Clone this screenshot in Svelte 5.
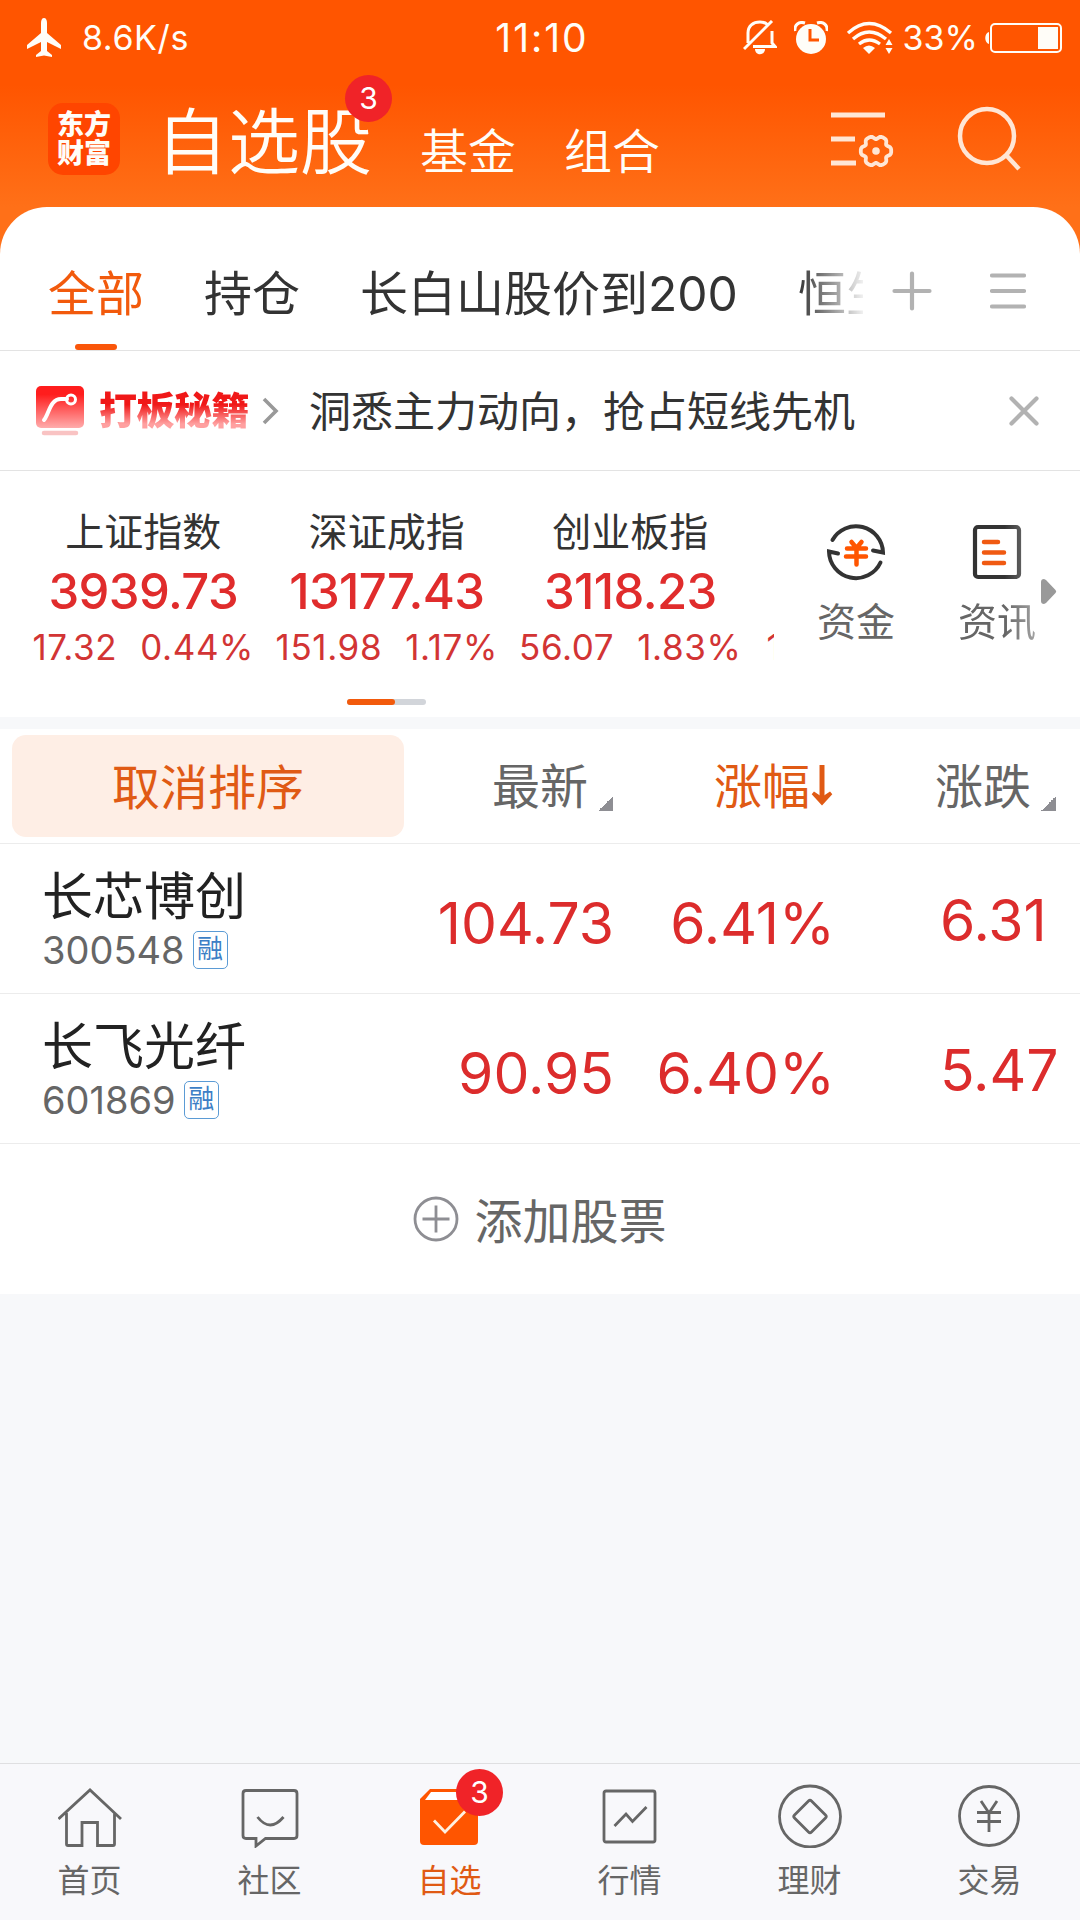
<script>
	const groups = ['全部', '持仓', '长白山股价到200', '恒生'];
	let activeGroup = $state('全部');
	let showBanner = $state(true);
	let activeNav = $state('自选');

	const indices = [
		{ name: '上证指数', price: '3939.73', change: '17.32', percent: '0.44%' },
		{ name: '深证成指', price: '13177.43', change: '151.98', percent: '1.17%' },
		{ name: '创业板指', price: '3118.23', change: '56.07', percent: '1.83%' }
	];

	const stocks = [
		{ name: '长芯博创', code: '300548', price: '104.73', percent: '6.41%', change: '6.31' },
		{ name: '长飞光纤', code: '601869', price: '90.95', percent: '6.40%', change: '5.47' }
	];

	const nav = ['首页', '社区', '自选', '行情', '理财', '交易'];

	// six-lobed gear outline, sampled every 5 degrees
	function gearPath(cx, cy) {
		const points = [];
		for (let deg = 0; deg < 360; deg += 5) {
			const t = (deg * Math.PI) / 180;
			const r = 14 + 1.7 * Math.cos(6 * t) - 0.5 * Math.cos(12 * t);
			points.push(`${(cx + r * Math.cos(t)).toFixed(2)} ${(cy + r * Math.sin(t)).toFixed(2)}`);
		}
		return `M${points.join('L')}Z`;
	}
</script>

<div class="screen">
	<header class="top">
		<div class="status">
			<div class="status-side">
				<svg class="plane" width="34" height="40" viewBox="0 0 34 40" fill="currentColor">
					<path d="M17 0c2 0 3 2 3 5v10l14 12v4l-14-7v9l5 4v2l-8-1.500-8 1.500v-2l5-4v-9L0 31v-4l14-12V5c0-3 1-5 3-5z" />
				</svg>
				<span class="speed">8.6K/s</span>
			</div>
			<span class="time">11:10</span>
			<div class="status-side right">
				<svg class="bell" width="34" height="35" viewBox="0 0 34 35" fill="none" stroke="currentColor" stroke-width="3">
					<path d="M5 23V13C5 6 10 2 17 2c4 0 6 1 8 3M29 11v12l3 3.500H10M1 29 29 1" />
					<path d="M12 29h10c0 7-10 7-10 0z" fill="currentColor" stroke="none" />
				</svg>
				<svg class="alarm" width="34" height="34" viewBox="0 0 34 34">
					<path d="M1 10C0 4 5 0 11 2M33 10c1-6-4-10-10-8" fill="none" stroke="currentColor" stroke-width="3" />
					<circle cx="17" cy="18" r="15" fill="currentColor" />
					<path d="M16 8v11h9" fill="none" stroke="#ff5500" stroke-width="3" />
				</svg>
				<svg class="wifi" width="46" height="34" viewBox="0 0 46 34" fill="none" stroke="currentColor" stroke-width="3.300">
					<path d="M1 12q21-19 43 0M6 18q16-14 33 0M12 23q10-8 21 0" />
					<path d="M16 27q6-5 12 0l-6 6z" fill="currentColor" stroke="none" />
					<path d="m42 18 3.500 6h-7zM42 33l3.500-6h-7z" fill="currentColor" stroke="none" />
				</svg>
				<span class="charge">33%</span>
				<svg class="battery" width="77" height="32" viewBox="0 0 77 32">
					<rect x="6" y="2" width="70" height="28" rx="4" fill="none" stroke="currentColor" stroke-width="2" />
					<path d="M4 10v12c-5-1-5-11 0-12z" fill="currentColor" />
					<rect x="53" y="5" width="20" height="22" fill="currentColor" />
				</svg>
			</div>
		</div>

		<div class="title-bar">
			<div class="logo"><span>东方</span><span>财富</span></div>
			<h1>自选股<span class="badge">3</span></h1>
			<span class="sub">基金</span>
			<span class="sub">组合</span>
			<svg class="filter" width="64" height="60" viewBox="0 0 64 60" fill="none" stroke="currentColor" stroke-width="5">
				<path d="M0 6h54M0 30h24M0 54h25" />
				<path d={gearPath(45, 42)} stroke-width="3.800" stroke-linejoin="round" />
				<circle cx="45" cy="42" r="3.800" fill="currentColor" stroke="none" />
			</svg>
			<svg class="search" width="64" height="66" viewBox="0 0 64 66" fill="none" stroke="currentColor" stroke-width="4.500">
				<circle cx="30" cy="30" r="27" />
				<path d="m49 49 13 14" />
			</svg>
		</div>
	</header>

	<main class="sheet">
		<div class="tabs">
			<div class="tab-list">
				{#each groups as group}
					<button class="tab" class:active={group === activeGroup} onclick={() => (activeGroup = group)}>{group}</button>
				{/each}
			</div>
			<svg class="plus" width="40" height="40" viewBox="0 0 40 40" stroke="currentColor" stroke-width="4.200" stroke-linecap="round">
				<path d="M20 2.500v35M2.500 20h35" />
			</svg>
			<svg class="menu" width="36" height="40" viewBox="0 0 36 40" stroke="currentColor" stroke-width="4.200" stroke-linecap="round">
				<path d="M2 4.500h32M2 20h32M2 35.500h32" />
			</svg>
		</div>

		{#if showBanner}
			<div class="banner">
				<svg class="promo-icon" width="48" height="50" viewBox="0 0 48 50">
					<defs>
						<linearGradient id="promo" x1="0" y1="0" x2="0" y2="1">
							<stop offset="0.200" stop-color="#ff1d1d" />
							<stop offset="1" stop-color="#ffacac" />
						</linearGradient>
					</defs>
					<rect width="48" height="42" rx="5" fill="url(#promo)" />
					<path d="M8 34c5-6 6-21 17-21h6" fill="none" stroke="#fff" stroke-width="4" stroke-linecap="round" />
					<circle cx="35" cy="13.500" r="4.500" fill="none" stroke="#fff" stroke-width="3" />
					<path d="M8 47h32" stroke="#f9c3c3" stroke-width="4.500" stroke-linecap="round" />
				</svg>
				<strong class="promo">打板秘籍</strong>
				<svg class="chevron" width="17" height="28" viewBox="0 0 17 28" fill="none" stroke="#999" stroke-width="3.600">
					<path d="m2 2 12 12L2 26" />
				</svg>
				<span class="slogan">洞悉主力动向，抢占短线先机</span>
				<button class="close" aria-label="关闭" onclick={() => (showBanner = false)}>
					<svg width="30" height="30" viewBox="0 0 30 30" stroke="currentColor" stroke-width="4.200" stroke-linecap="round">
						<path d="m2.500 2.500 25 25M27.500 2.500l-25 25" />
					</svg>
				</button>
			</div>
		{/if}

		<section class="market">
			<div class="index-list">
				{#each indices as item}
					<div class="index">
						<span class="index-name">{item.name}</span>
						<span class="index-price">{item.price}</span>
						<div class="index-change"><span>{item.change}</span><span>{item.percent}</span></div>
					</div>
				{/each}
				<div class="index next"><div class="index-change"><span>1</span></div></div>
			</div>
			<div class="shortcut">
				<svg width="62" height="62" viewBox="0 0 62 62" fill="none" stroke="#333" stroke-width="4" stroke-linecap="round">
					<path d="M7.500 19A27 27 0 0 1 58 31.500l-10-2M55.500 41.500A27 27 0 0 1 4 30.500l9 2" />
					<path d="m26.500 21 5 6 5-6M22 27.500h19M21 35.500h20M31.500 27.500v16" stroke="#ff5500" stroke-width="4.500" />
				</svg>
				<span>资金</span>
			</div>
			<div class="shortcut fade">
				<svg width="62" height="62" viewBox="0 0 62 62" fill="none" stroke="#333" stroke-width="4.200" stroke-linecap="round">
					<rect x="9" y="6" width="44" height="50" rx="3" />
					<path d="M18 21h14M18 31.500h20M18 42h20" stroke="#f05a12" stroke-width="4.500" />
				</svg>
				<span>资讯</span>
			</div>
			<svg class="more" width="16" height="25" viewBox="0 0 16 25" fill="#999">
				<path d="M0 3q0-3 3-3l2 1 9.500 10q1.500 1.500 0 3L5 24l-2 1q-3 0-3-3z" />
			</svg>
		</section>
		<div class="pager"><i></i></div>

		<section class="table">
			<div class="row head">
				<button class="reset">取消排序</button>
				<span class="col first">最新<i class="corner"></i></span>
				<span class="col sorted">涨幅<svg width="24" height="44" viewBox="0 0 24 44" fill="none" stroke="currentColor"><path d="M12 0v34" stroke-width="5" /><path d="m3 28 9 10 9-10-9 6z" fill="currentColor" stroke-width="3.500" /></svg></span>
				<span class="col">涨跌<i class="corner"></i></span>
			</div>
			{#each stocks as stock}
				<div class="row">
					<div class="stock">
						<span class="stock-name">{stock.name}</span>
						<div class="stock-code">{stock.code}<span class="tag">融</span></div>
					</div>
					<span class="num">{stock.price}</span>
					<span class="num">{stock.percent}</span>
					<span class="num last">{stock.change}</span>
				</div>
			{/each}
		</section>

		<button class="add">
			<svg width="46" height="46" viewBox="0 0 46 46" fill="none" stroke="#8e8e93" stroke-width="2.800">
				<circle cx="23" cy="23" r="21" />
				<path d="M23 9.500v27M9.500 23h27" />
			</svg>
			<span>添加股票</span>
		</button>
	</main>

	<nav class="bottom">
		{#each nav as label, i}
			<button class="nav-item" class:active={label === activeNav} onclick={() => (activeNav = label)}>
				<svg width="64" height="64" viewBox="0 0 64 64" fill="none" stroke="currentColor" stroke-width="2.800">
					{#if i === 0}
						<path d="M.5 35 32 6l31 29M8.500 29v31q0 1.500 1.500 1.500h14V38.500h15.500v23H55q1.500 0 1.500-1.500V29" />
					{:else if i === 1}
						<path d="M8 6.500h48q3 0 3 3v42q0 3-3 3H27.500l-9.500 7.500v-7.500H8q-3 0-3-3v-42q0-3 3-3z" />
						<path d="M19.500 33q12.500 16 26 0" />
					{:else if i === 2}
						<path d="M12 5h38l10 10v42q0 4-4 4H6q-4 0-4-4V15z" fill="#ff5500" stroke="none" />
						<path d="M13 8h36l6 8H7z" fill="#fff" stroke="none" />
						<path d="m16 36.500 11 11.500 20-20.500" stroke="#fff0e0" />
					{:else if i === 3}
						<rect x="6" y="7" width="51" height="51" rx="2" />
						<path d="m16.500 42 11.500-12 6.500 7.500L48.500 23" />
					{:else if i === 4}
						<circle cx="32" cy="32.500" r="30.500" />
						<path d="M30.500 17q1.500-1.500 3 0L47.500 31q1.500 1.500 0 3L33.500 48q-1.500 1.500-3 0L16.500 34q-1.500-1.500 0-3z" />
					{:else}
						<circle cx="31" cy="32" r="29.500" />
						<path d="m23 17 8 12 8-12M19 28.500h24M19 37.500h24M31 28v20" />
					{/if}
				</svg>
				{#if i === 2}<span class="badge">3</span>{/if}
				<span class="nav-label">{label}</span>
			</button>
		{/each}
	</nav>
</div>

<style>
	:global(body) {
		background: #f7f8fa;
	}

	.screen {
		display: flex;
		flex-direction: column;
		width: 1080px;
		height: 1920px;
		overflow: hidden;
		background: #f7f8fa;
		color: #333;
		font-family: Inter, 'Noto Sans CJK SC', sans-serif;
		font-weight: 400;
	}

	button {
		padding: 0;
		border: 0;
		background: none;
		color: inherit;
		font: inherit;
		cursor: pointer;
	}

	svg {
		display: block;
		flex: none;
	}

	.top {
		height: 260px;
		flex: none;
		background: linear-gradient(#ff5500 85px, #ff7018 207px);
		color: #fffdf8;
	}

	.status {
		display: grid;
		grid-template-columns: 1fr auto 1fr;
		align-items: center;
		height: 75px;
		padding: 0 18px 0 27px;
		box-sizing: border-box;
	}

	.status-side {
		display: flex;
		align-items: center;
	}

	.status-side.right {
		justify-content: flex-end;
	}

	.speed {
		margin-left: 21px;
		font-size: 34px;
		letter-spacing: 0.6px;
	}

	.time {
		margin-right: 5px;
		font-size: 39px;
		letter-spacing: 2px;
	}

	.bell {
		margin-right: 17px;
	}

	.alarm {
		margin-right: 19px;
	}

	.charge {
		margin: 0 7px 0 10px;
		font-size: 34px;
	}

	.title-bar {
		display: flex;
		height: 132px;
		padding: 0 59px 0 48px;
	}

	.logo {
		display: flex;
		flex-direction: column;
		justify-content: center;
		width: 72px;
		height: 72px;
		margin: 28px 36px 0 0;
		border-radius: 15px;
		background: #ff4500;
		font-size: 27px;
		font-weight: 900;
		line-height: 29px;
		text-align: center;
	}

	h1 {
		position: relative;
		width: 217px;
		margin: 17px 47px 0 0;
		font-size: 72px;
		font-weight: 350;
		line-height: 100px;
		white-space: nowrap;
	}

	.badge {
		position: absolute;
		width: 47px;
		height: 47px;
		border-radius: 50%;
		background: #f02328;
		color: #fff;
		font-size: 30px;
		font-weight: 400;
		line-height: 47px;
		text-align: center;
	}

	h1 .badge {
		left: 189px;
		top: -17px;
	}

	.sub {
		margin: 42px 48px 0 0;
		font-size: 48px;
		font-weight: 350;
		line-height: 70px;
	}

	.filter {
		margin: 34px 62px 0 auto;
		color: #ffe6d5;
	}

	.search {
		margin-top: 31px;
		color: #ffe6d5;
	}

	.sheet {
		margin-top: -53px;
		border-radius: 47px 47px 0 0;
		background: #fff;
	}

	.tabs {
		display: flex;
		align-items: flex-start;
		height: 143px;
		padding-left: 48px;
		border-bottom: 1px solid #e3e3e3;
		color: #b2b2b2;
	}

	.tab-list {
		display: flex;
		gap: 60px;
		width: 815px;
		height: 143px;
		overflow: hidden;
		mask-image: linear-gradient(90deg, #000 750px, transparent 820px);
	}

	.tab {
		position: relative;
		flex: none;
		height: 143px;
		padding-top: 22px;
		color: #333;
		font-size: 48px;
		white-space: nowrap;
	}

	.tab.active {
		color: #f25a0c;
	}

	.tab.active::after {
		content: '';
		position: absolute;
		left: 27px;
		bottom: 0;
		width: 42px;
		height: 6px;
		border-radius: 3px;
		background: #fa560a;
	}

	.plus {
		margin: 64px 58px 0 29px;
	}

	.menu {
		margin-top: 64px;
	}

	.banner {
		display: flex;
		align-items: center;
		height: 119px;
		padding: 0 41px 0 36px;
		border-bottom: 1px solid #e3e3e3;
	}

	.promo-icon {
		margin-right: 15px;
	}

	.promo {
		margin-bottom: 6px;
		background: linear-gradient(#f01818 45%, #ffa0a0 80%);
		background-clip: text;
		color: transparent;
		font-size: 38px;
		font-weight: 900;
		letter-spacing: -0.5px;
	}

	.chevron {
		margin: 0 30px 0 13px;
	}

	.slogan {
		margin-bottom: 4px;
		font-size: 42px;
	}

	.close {
		margin-left: auto;
		color: #b2b2b2;
	}

	.market {
		display: flex;
		height: 228px;
	}

	.index-list {
		display: flex;
		width: 753px;
		height: 190px;
		padding-left: 21px;
		overflow: hidden;
	}

	.index {
		display: flex;
		flex: 0 0 243.500px;
		flex-direction: column;
		align-items: center;
		padding: 38px 0 0 1px;
		box-sizing: border-box;
	}

	.index-name {
		font-size: 39px;
		line-height: 46px;
	}

	.index-price {
		margin-top: 8px;
		color: #e02c2c;
		font-size: 49px;
		font-weight: 500;
		letter-spacing: -0.6px;
		line-height: 58px;
	}

	.index-change {
		display: flex;
		gap: 23px;
		margin-top: 5px;
		color: #d23434;
		font-size: 35px;
		letter-spacing: 0.6px;
		line-height: 42px;
	}

	.index.next {
		align-items: flex-start;
		padding: 150px 0 0 15px;
	}

	.shortcut {
		display: flex;
		flex-direction: column;
		align-items: center;
		width: 78px;
		margin: 50px 0 0 43px;
		color: #666;
		font-size: 39px;
		line-height: 46px;
		white-space: nowrap;
	}

	.shortcut svg {
		margin-bottom: 16px;
	}

	.shortcut.fade {
		margin-left: 63px;
		mask-image: linear-gradient(90deg, #000 60%, #0009);
	}

	.more {
		margin: 108px 0 0 5px;
	}

	.pager {
		width: 79px;
		height: 6px;
		margin: 0 0 0 347px;
		border-radius: 3px;
		background: #d2d5da;
	}

	.pager i {
		display: block;
		width: 48px;
		height: 6px;
		border-radius: 3px;
		background: #f25a0c;
	}

	.table {
		margin-top: 12px;
		border-top: 12px solid #f7f8fa;
	}

	.row {
		display: grid;
		grid-template-columns: 404px 210px 221px 221px;
		align-items: center;
		height: 149px;
		border-bottom: 1px solid #ececec;
	}

	.row.head {
		height: 114px;
	}

	.reset {
		height: 102px;
		margin-left: 12px;
		padding-bottom: 5px;
		border-radius: 14px;
		background: #feeee5;
		color: #e05a14;
		font-size: 48px;
	}

	.col {
		display: flex;
		align-items: center;
		justify-content: flex-end;
		padding-top: 1px;
		color: #666;
		font-size: 48px;
		line-height: 70px;
	}

	.col.first {
		padding-right: 1px;
	}

	.col.sorted {
		padding-right: 1px;
		color: #e05a14;
	}

	.corner {
		width: 15px;
		height: 15px;
		margin: 33px 0 0 10px;
		background: linear-gradient(135deg, transparent 50%, #8e8e93 50%);
	}

	.stock {
		display: flex;
		flex-direction: column;
		padding: 2px 0 0 42px;
	}

	.stock-name {
		color: #222;
		font-size: 51px;
		line-height: 60px;
	}

	.stock-code {
		display: flex;
		align-items: center;
		color: #666;
		font-size: 38px;
		line-height: 46px;
	}

	.tag {
		width: 33px;
		height: 36px;
		margin-left: 8px;
		border: 1px solid #5b9bd5;
		border-radius: 5px;
		color: #3d7fc6;
		font-size: 26px;
		line-height: 34px;
		text-align: center;
	}

	.num {
		padding-top: 10px;
		color: #dc2c2c;
		font-size: 57px;
		text-align: right;
	}

	.num.last {
		padding: 4px 0 0 105px;
		text-align: left;
	}

	.add {
		display: flex;
		align-items: center;
		justify-content: center;
		gap: 15px;
		width: 100%;
		height: 150px;
		color: #666;
		font-size: 48px;
	}

	.add span {
		margin-bottom: 3px;
	}

	.bottom {
		display: grid;
		grid-template-columns: repeat(6, 1fr);
		height: 156px;
		margin-top: auto;
		border-top: 1px solid #dfdfe1;
		background: #f8f8fb;
	}

	.nav-item {
		position: relative;
		display: flex;
		flex-direction: column;
		align-items: center;
		padding: 20px 1px 0 0;
		color: #666;
	}

	.nav-item.active {
		color: #e05a14;
	}

	.nav-item .badge {
		left: 96px;
		top: 5px;
	}

	.nav-label {
		margin-top: 10px;
		font-size: 32px;
		line-height: 46px;
	}
</style>
